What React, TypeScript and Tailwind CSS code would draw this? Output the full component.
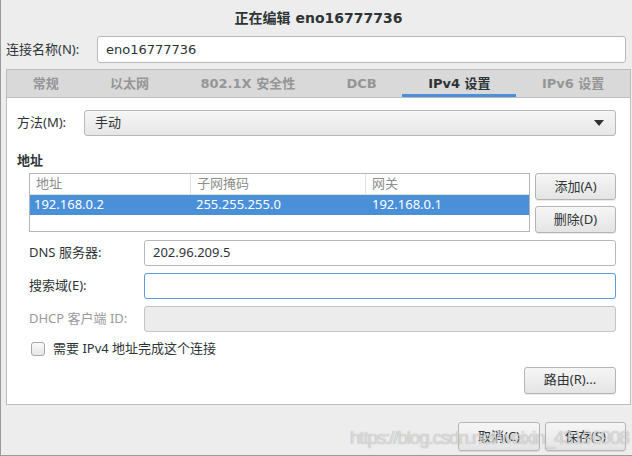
import React from "react";

const cjk = "font-['Noto_Sans','Noto_Sans_CJK_SC',sans-serif]";
const dv = "font-['DejaVu_Sans','Noto_Sans_CJK_SC',sans-serif]";

const tabs = ["常规", "以太网", "802.1X 安全性", "DCB", "IPv4 设置", "IPv6 设置"];

function Btn({ label, className = "" }: { label: string; className?: string }) {
  return (
    <div
      className={`flex h-[27px] items-center justify-center rounded-[3px] border border-[#b4b4b4] bg-gradient-to-b from-[#f6f6f6] to-[#e4e4e4] text-[13px] text-[#2e3436] shadow-[0_1px_0_rgba(0,0,0,0.08)] ${className}`}
    >
      {label}
    </div>
  );
}

function Field({
  label,
  value,
  state,
}: {
  label: string;
  value?: string;
  state?: "focus" | "disabled";
}) {
  const box =
    state === "focus"
      ? "border-[#5b9ae0] bg-white"
      : state === "disabled"
        ? "border-[#c4c4c4] bg-[#ececec]"
        : "border-[#b8b8b8] bg-white";
  return (
    <div className="flex h-[26px] items-center">
      <div
        className={`w-[115px] shrink-0 text-[13px] ${
          state === "disabled" ? "text-[#9a9a9a]" : "text-[#2e3436]"
        }`}
      >
        {label}
      </div>
      <div className={`flex h-[26px] flex-1 items-center rounded-[3px] border px-[8px] text-[13px] text-[#2e3436] ${box}`}>
        {value}
      </div>
    </div>
  );
}

export default function App() {
  return (
    <div className="relative h-[456px] w-[632px] overflow-hidden">
      <div className={`flex h-[456px] w-[636px] flex-col border-b border-l border-[#9a9a9a] bg-[#ededed] ${cjk}`}>
        {/* title */}
        <div className={`flex h-[36px] shrink-0 items-center justify-center text-[14px] font-bold text-[#2e3436] ${dv}`}>
          正在编辑 eno16777736
        </div>

        {/* connection name */}
        <div className="flex h-[27px] items-center pl-[5px] pr-[10px]">
          <div className="w-[91px] shrink-0 text-[13px] text-[#2e3436]">连接名称(N):</div>
          <div className={`flex h-[27px] flex-1 items-center rounded-[3px] border border-[#b8b8b8] bg-white px-[8px] text-[13px] text-[#2e3436] ${dv}`}>
            eno16777736
          </div>
        </div>

        {/* notebook */}
        <div className="mx-[5px] mt-[6px] flex flex-col">
          <div className="flex h-[28px] border border-b-0 border-[#bdbdbd] bg-[#d9d9d9]">
            {tabs.map((t, i) => (
              <div
                key={t}
                className={`flex flex-auto items-center justify-center text-[13px] font-bold ${dv} ${
                  i === 4
                    ? "border-b-[3px] border-[#4a90d9] pt-[3px] text-[12.5px] text-[#2e3436]"
                    : "text-[#959595]"
                }`}
              >
                {t}
              </div>
            ))}
          </div>

          <div className="flex h-[308px] flex-col border border-[#bdbdbd] bg-white pl-[10px] pr-[14px] pt-[12px]">
            {/* method */}
            <div className="flex h-[26px] items-center">
              <div className="w-[67px] shrink-0 text-[13px] text-[#2e3436]">方法(M):</div>
              <div className="flex h-[26px] flex-1 items-center justify-between rounded-[3px] border border-[#b8b8b8] bg-gradient-to-b from-[#f6f6f6] to-[#e6e6e6] pl-[10px] pr-[11px] text-[13px] text-[#2e3436]">
                <span>手动</span>
                <svg width="10" height="6" viewBox="0 0 10 6">
                  <path d="M0 0h10L5 6z" fill="#2e3436" />
                </svg>
              </div>
            </div>

            <div className="mt-[15px] text-[13px] font-bold leading-[18px] text-[#2e3436]">地址</div>

            {/* address table */}
            <div className="mt-[4px] flex pl-[12px]">
              <div className="h-[59px] w-[501px] border border-[#b4b4b4] bg-white text-[13px]">
                <div className="flex h-[21px] items-center border-b border-[#e2e2e2] text-[#8d8d8d]">
                  <div className="w-[161px] border-r border-[#e2e2e2] pl-[6px]">地址</div>
                  <div className="w-[175px] border-r border-[#e2e2e2] pl-[6px]">子网掩码</div>
                  <div className="flex-1 pl-[6px]">网关</div>
                </div>
                <div className="flex h-[20px] items-center bg-[#4a90d9] text-white">
                  <div className="w-[161px] pl-[4px]">192.168.0.2</div>
                  <div className="w-[175px] pl-[5px]">255.255.255.0</div>
                  <div className="flex-1 pl-[6px]">192.168.0.1</div>
                </div>
              </div>
              <div className="ml-[5px] flex w-[81px] flex-col gap-[6px]">
                <Btn label="添加(A)" />
                <Btn label="删除(D)" />
              </div>
            </div>

            {/* dns etc */}
            <div className="mt-[7px] flex flex-col gap-[7px] pl-[12px]">
              <Field label="DNS 服务器:" value="202.96.209.5" />
              <Field label="搜索域(E):" state="focus" />
              <Field label="DHCP 客户端 ID:" state="disabled" />
            </div>

            <div className="mt-[7px] flex items-center pl-[14px]">
              <div className="h-[14px] w-[14px] rounded-[3px] border border-[#a8a8a8] bg-gradient-to-b from-[#fafafa] to-[#e6e6e6]" />
              <span className="ml-[8px] text-[13px] text-[#2e3436]">需要 IPv4 地址完成这个连接</span>
            </div>

            <div className="mt-[8px] flex justify-end">
              <Btn label="路由(R)..." className="w-[92px]" />
            </div>
          </div>
        </div>

        {/* footer */}
        <div className="mt-[17px] flex justify-end gap-[5px] pr-[10px]">
          <Btn label="取消(C)" className="h-[29px] w-[82px]" />
          <Btn label="保存(S)" className="h-[29px] w-[81px]" />
        </div>
      </div>

      {/* watermark */}
      <div className="pointer-events-none absolute left-[350px] top-[424px] font-['Liberation_Sans',sans-serif] text-[19px] tracking-[-1.2px] whitespace-nowrap text-white/60 [text-shadow:0_0_1px_rgba(90,90,90,0.6)]">
        https://blog.csdn.net/weixin_43196908
      </div>
    </div>
  );
}
